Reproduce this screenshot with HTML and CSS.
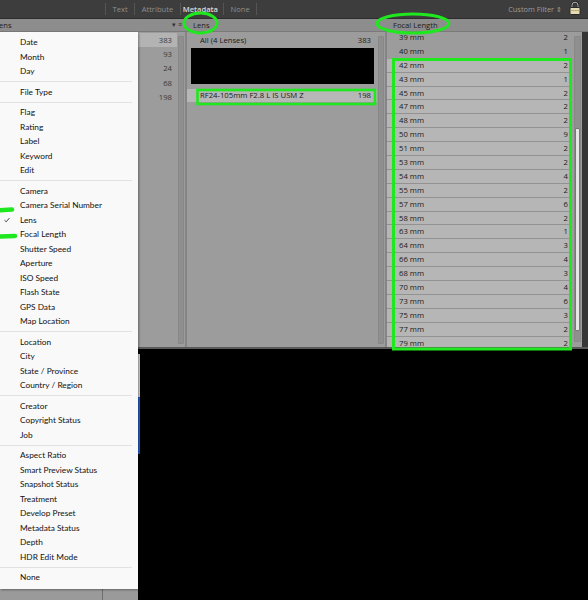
FILE: index.html
```html
<!DOCTYPE html>
<html>
<head>
<meta charset="utf-8">
<link rel="stylesheet" href="styles.css">
</head>
<body>
<div class="app">
  <div class="topbar">
    <div class="tabs">
      <span class="sep"></span><span class="tab">Text</span><span class="sep"></span><span class="tab">Attribute</span><span class="sep"></span><span class="tab active">Metadata</span><span class="sep"></span><span class="tab">None</span><span class="sep"></span>
    </div>
    <div class="custom">
      <span>Custom Filter &#8661;</span>
      <svg class="lock" width="12" height="14" viewBox="0 0 12 14">
        <path d="M3 6.5 V4.2 A3 3 0 0 1 9 4.2 V6.5" fill="none" stroke="#1c1c1c" stroke-width="2.2"/>
        <path d="M3 6.5 V4.2 A3 3 0 0 1 9 4.2 V6.5" fill="none" stroke="#bdbdbd" stroke-width="1"/>
        <rect x="1" y="6.5" width="10" height="7" rx="1" fill="#e6dcb4" stroke="#2a2a2a" stroke-width="1"/>
        <rect x="1.5" y="9" width="9" height="1" fill="#b8ab7c"/>
      </svg>
    </div>
  </div>
  <div class="headers">
    <div class="h h1"><span class="hname">ens</span><span class="ctrl">&#9662; &#8801;</span></div>
    <div class="h h2">Lens</div>
    <div class="h h3">Focal Length</div>
  </div>
  <div class="panels">
    <div class="col col1">
      <div class="list">
        <div class="row sel"><span></span><span>383</span></div>
        <div class="row"><span></span><span>93</span></div>
        <div class="row"><span></span><span>24</span></div>
        <div class="row"><span></span><span>68</span></div>
        <div class="row"><span></span><span>198</span></div>
      </div>
      <div class="track"></div>
    </div>
    <div class="col col2">
      <div class="list">
        <div class="row all"><span>All (4 Lenses)</span><span>383</span></div>
        <div class="thumbbox"></div>
        <div class="row lensrow"><span>RF24-105mm F2.8 L IS USM Z</span><span>198</span></div>
      </div>
      <div class="track"></div>
    </div>
    <div class="col col3">
      <div class="list">
        <div class="frow"><span>39 mm</span><span>2</span></div>
        <div class="frow"><span>40 mm</span><span>1</span></div>
        <div class="frow on"><span>42 mm</span><span>2</span></div>
        <div class="frow on"><span>43 mm</span><span>1</span></div>
        <div class="frow on"><span>45 mm</span><span>2</span></div>
        <div class="frow on"><span>47 mm</span><span>2</span></div>
        <div class="frow on"><span>48 mm</span><span>2</span></div>
        <div class="frow on"><span>50 mm</span><span>9</span></div>
        <div class="frow on"><span>51 mm</span><span>2</span></div>
        <div class="frow on"><span>53 mm</span><span>2</span></div>
        <div class="frow on"><span>54 mm</span><span>4</span></div>
        <div class="frow on"><span>55 mm</span><span>2</span></div>
        <div class="frow on"><span>57 mm</span><span>6</span></div>
        <div class="frow on"><span>58 mm</span><span>2</span></div>
        <div class="frow on"><span>63 mm</span><span>1</span></div>
        <div class="frow on"><span>64 mm</span><span>3</span></div>
        <div class="frow on"><span>66 mm</span><span>4</span></div>
        <div class="frow on"><span>68 mm</span><span>3</span></div>
        <div class="frow on"><span>70 mm</span><span>4</span></div>
        <div class="frow on"><span>73 mm</span><span>6</span></div>
        <div class="frow on"><span>75 mm</span><span>3</span></div>
        <div class="frow on"><span>77 mm</span><span>2</span></div>
        <div class="frow on"><span>79 mm</span><span>2</span></div>
      </div>
      <div class="track"><div class="thumb"></div></div>
      <div class="edge"></div>
    </div>
  </div>
  <div class="bottom">
    <div class="bleft"><div class="bline"></div></div>
    <div class="bstrip"></div>
    <div class="bblack"></div>
  </div>
</div>

<div class="menu">
  <div class="mi">Date</div>
  <div class="mi">Month</div>
  <div class="mi">Day</div>
  <div class="ms"></div>
  <div class="mi">File Type</div>
  <div class="ms"></div>
  <div class="mi">Flag</div>
  <div class="mi">Rating</div>
  <div class="mi">Label</div>
  <div class="mi">Keyword</div>
  <div class="mi">Edit</div>
  <div class="ms"></div>
  <div class="mi">Camera</div>
  <div class="mi">Camera Serial Number</div>
  <div class="mi checked"><svg class="check" width="6" height="6" viewBox="0 0 6 6"><path d="M0.5 3.2 L2.2 4.8 L5.5 1" fill="none" stroke="#333" stroke-width="0.9"/></svg>Lens</div>
  <div class="mi">Focal Length</div>
  <div class="mi">Shutter Speed</div>
  <div class="mi">Aperture</div>
  <div class="mi">ISO Speed</div>
  <div class="mi">Flash State</div>
  <div class="mi">GPS Data</div>
  <div class="mi">Map Location</div>
  <div class="ms"></div>
  <div class="mi">Location</div>
  <div class="mi">City</div>
  <div class="mi">State / Province</div>
  <div class="mi">Country / Region</div>
  <div class="ms"></div>
  <div class="mi">Creator</div>
  <div class="mi">Copyright Status</div>
  <div class="mi">Job</div>
  <div class="ms"></div>
  <div class="mi">Aspect Ratio</div>
  <div class="mi">Smart Preview Status</div>
  <div class="mi">Snapshot Status</div>
  <div class="mi">Treatment</div>
  <div class="mi">Develop Preset</div>
  <div class="mi">Metadata Status</div>
  <div class="mi">Depth</div>
  <div class="mi">HDR Edit Mode</div>
  <div class="ms"></div>
  <div class="mi">None</div>
</div>

<svg class="marks" width="588" height="600" viewBox="0 0 588 600">
  <g fill="none" stroke="#1fe81f" stroke-linecap="round">
    <ellipse cx="200.5" cy="23" rx="16.5" ry="10" stroke-width="3"/>
    <ellipse cx="413" cy="23.5" rx="36" ry="9.5" stroke-width="3"/>
    <path d="M-2 210.5 L12 209.5" stroke-width="4.5"/>
    <path d="M-2 236.5 L15 236" stroke-width="4.5"/>
    <rect x="197.5" y="90" width="177.5" height="14" stroke-width="2.6" stroke-linecap="butt"/>
    <rect x="393.5" y="59.5" width="177" height="289.5" stroke-width="3" stroke-linecap="butt"/>
  </g>
</svg>
</body>
</html>
```

FILE: styles.css
```css
* { box-sizing: border-box; }
html, body { margin: 0; padding: 0; background: #000; }
body { width: 588px; height: 600px; overflow: hidden; position: relative;
  font-family: "Open Sans", "Noto Sans", sans-serif; }

.app { width: 588px; height: 600px; display: flex; flex-direction: column; }

/* top bar */
.topbar { height: 19px; background: #3d3d3d; display: flex; align-items: center;
  border-bottom: 1px solid #2c2c2c; position: relative; }
.tabs { display: flex; align-items: center; margin-left: 105px; height: 100%; }
.tab { font-size: 7.6px; color: #8e8e8e; padding: 0 6.5px; line-height: 18px; }
.tab.active { color: #d8d8d8; font-weight: 600; padding: 0 5px 0 2px; }
.sep { width: 1px; height: 12px; background: #555; }
.custom { margin-left: auto; display: flex; align-items: center; gap: 7px;
  font-size: 7.4px; color: #9c9c9c; padding-right: 7px; }
.lock { display: block; margin-top: -2px; }

/* header row */
.headers { height: 13px; background: #8d8d8d; display: flex; border-bottom: 1px solid #7a7a7a;
  font-size: 7.6px; color: #202020; line-height: 12px; }
.h1 { width: 186px; display: flex; justify-content: space-between; padding-right: 4px; }
.hname { margin-left: -1px; }
.ctrl { color: #333; font-size: 7px; }
.h2 { width: 200px; padding-left: 7px; }
.h3 { flex: 1; padding-left: 7px; }

/* panels */
.panels { height: 317px; display: flex; background: #9c9c9c;
  border-bottom: 2px solid #5a5a5a; overflow: hidden; }
.col { display: flex; height: 100%; border-right: 2px solid #858585; }
.col1 { width: 187px; }
.col2 { width: 200px; }
.col3 { flex: 1; border-right: none; }
.list { flex: 1; overflow: hidden; font-size: 7.7px; color: #1a1a1a; }
.track { width: 6px; margin: 4px 1px 3px 1px; background: #8f8f8f; border: 1px solid #888;
  border-radius: 1px; position: relative; }

.row { display: flex; justify-content: space-between; height: 14.2px; line-height: 14.2px;
  padding-right: 5px; }
.col1 .list { padding-top: 1px; }
.col1 .row span:last-child { color: #3a3a3a; }
.row.sel { background: #b3b3b3; }
.col2 .list { padding-top: 1px; }
.col2 .row { padding-left: 13px; padding-right: 6px; }
.row.all { height: 15px; line-height: 14px; }
.thumbbox { height: 36px; background: #000; margin: 0 3px 0 4px; }
.row.lensrow { margin-top: 5px; height: 13px; line-height: 13px; background: #b7b7b7; }

.col3 .list { margin-top: -1px; }
.frow { display: flex; justify-content: space-between; height: 13.9px; line-height: 13px;
  padding-left: 12px; padding-right: 4px; border-bottom: 1px solid transparent; }
.frow.on { background: #b6b6b6; border-bottom-color: #929292; }
.col3 .track { margin: 4px 1px 5px 2px; width: 7px; }
.thumb { position: absolute; left: 0; right: 0; top: 91px; bottom: 10px; background: #e6e6e6;
  border: 1px solid #777; border-radius: 1px; }
.edge { width: 6px; background: #363636; }

/* bottom */
.bottom { flex: 1; display: flex; }
.bleft { width: 138px; background: #9a9a9a; position: relative; display: flex; }
.bline { width: 1px; background: #6d6d6d; margin-left: 102px; }
.bstrip { width: 2px; background: linear-gradient(#000 0, #000 5px, #cfcfcf 5px, #cfcfcf 48px, #1e5fd0 48px, #1e5fd0 105px, #000 105px); }
.bblack { flex: 1; background: #000; }

/* dropdown menu */
.menu { position: absolute; left: 0; top: 32px; width: 138px; height: 557px;
  background: #f9f9f9; box-shadow: 1px 1px 2px rgba(0,0,0,0.35);
  padding-top: 3px; font-family: Lato, "Open Sans", sans-serif; font-size: 8.3px; color: #111; }
.mi { height: 14.5px; line-height: 14.5px; padding-left: 20px; position: relative; }
.ms { height: 1px; background: #e2e2e2; margin: 2.5px 6px 2.5px 0; }
.check { position: absolute; left: 4px; top: 4.5px; }

/* annotation overlay */
.marks { position: absolute; left: 0; top: 0; pointer-events: none; }
```
